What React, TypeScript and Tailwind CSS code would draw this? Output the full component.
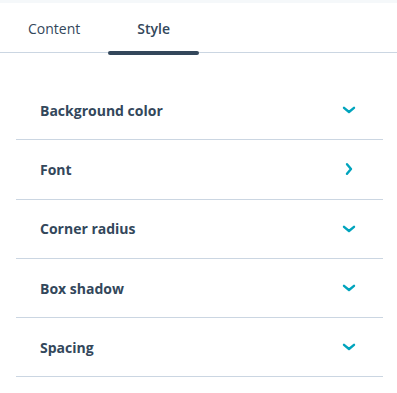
import React, { useState } from 'react';

const sections = [
  { label: 'Background color', icon: 'down' },
  { label: 'Font', icon: 'right' },
  { label: 'Corner radius', icon: 'down' },
  { label: 'Box shadow', icon: 'down' },
  { label: 'Spacing', icon: 'down' },
];

function Chevron({ dir }: { dir: string }) {
  return (
    <svg width="14" height="14" viewBox="0 0 14 14" fill="none" className="text-[#00a4bd]">
      {dir === 'down' ? (
        <path d="M2 4.8l5 4.2 5-4.2" stroke="currentColor" strokeWidth="2.4" strokeLinecap="round" strokeLinejoin="round" />
      ) : (
        <path d="M5 2.2l4 4.8-4 4.8" stroke="currentColor" strokeWidth="2.4" strokeLinecap="round" strokeLinejoin="round" />
      )}
    </svg>
  );
}

export default function App() {
  const [tab, setTab] = useState('style');

  return (
    <div className="w-[397px] h-[393px] bg-white text-[#33475b]" style={{ fontFamily: '"Open Sans", "Liberation Sans", sans-serif' }}>
      <div className="h-[3px] bg-[#f5f8fa]" />
      <div className="flex h-[50px] border-b border-[#cbd6e2]">
        {[
          { id: 'content', label: 'Content', pad: 'px-7' },
          { id: 'style', label: 'Style', pad: 'px-[29px]' },
        ].map((t) => (
          <button
            key={t.id}
            onClick={() => setTab(t.id)}
            className={
              'relative pt-[1px] text-[14px] ' + t.pad + ' ' +
              (tab === t.id ? 'font-semibold' : 'font-normal')
            }
          >
            {t.label}
            {tab === t.id && (
              <span className="absolute left-0 right-0 bottom-[-3px] h-[4px] rounded-full bg-[#33475b]" />
            )}
          </button>
        ))}
      </div>

      <div className="pl-4 pr-[14px] pt-[28px]">
        {sections.map((s) => (
          <div key={s.label} className="flex h-[59.3px] items-center justify-between border-b border-[#cbd6e2] pl-6 pr-[27px]">
            <span className="text-[14px] font-bold">{s.label}</span>
            <Chevron dir={s.icon} />
          </div>
        ))}
      </div>
    </div>
  );
}
